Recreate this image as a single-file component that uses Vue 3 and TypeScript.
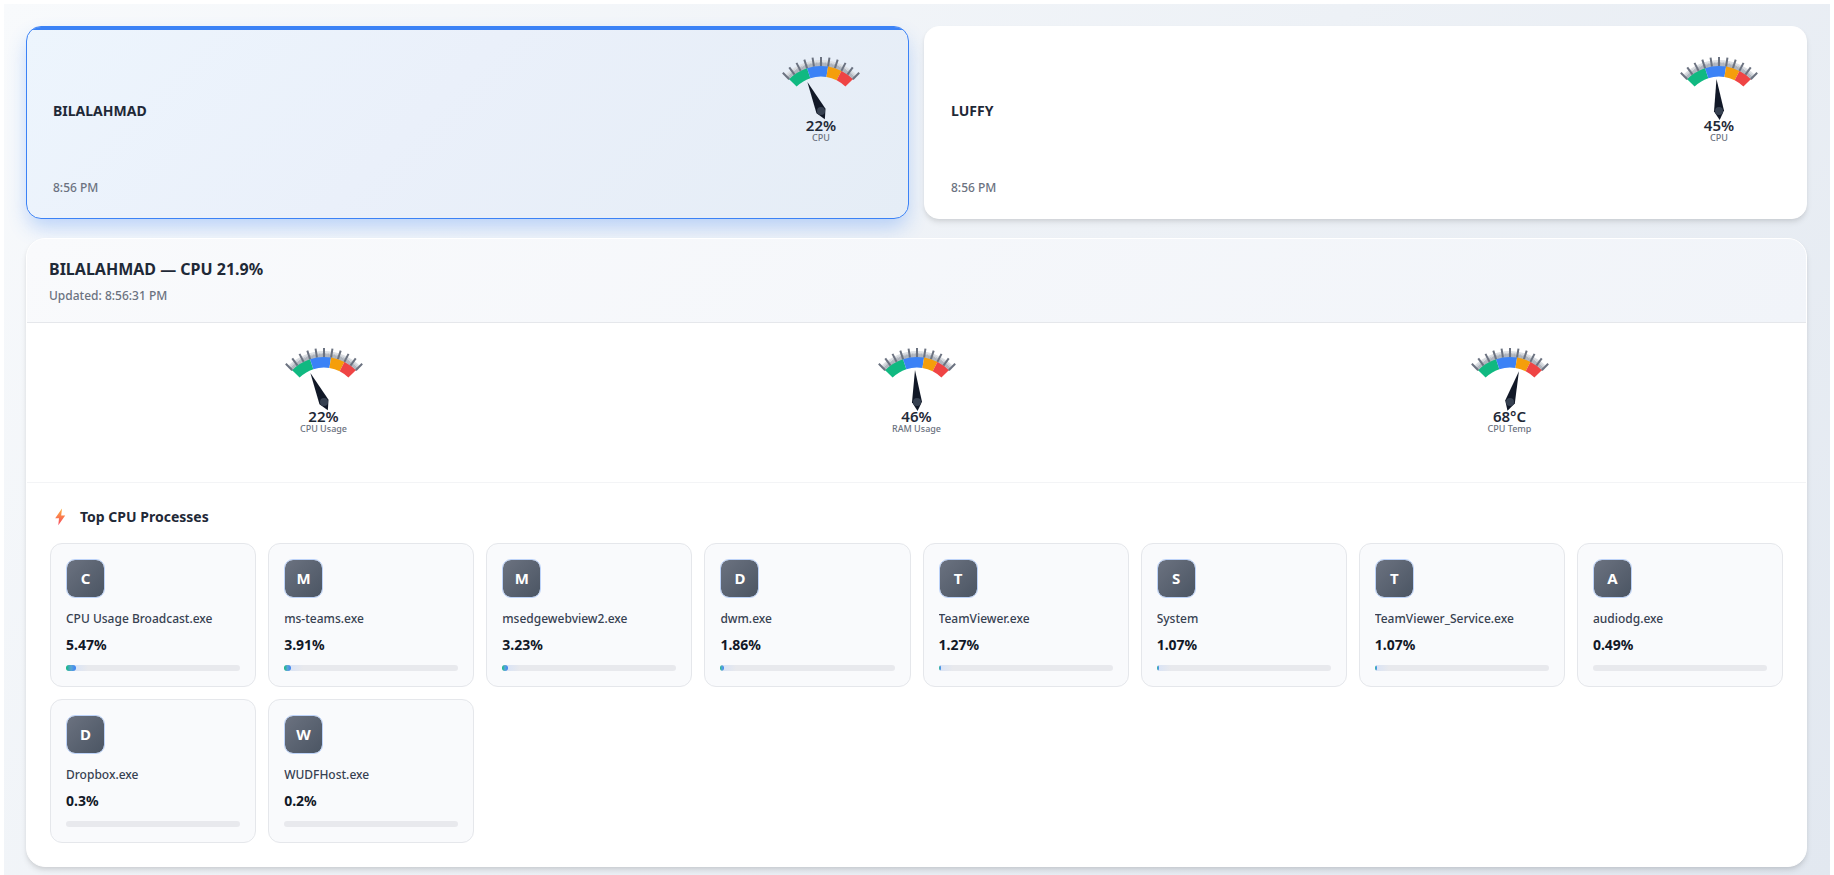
<script setup lang="ts">
import { ref } from 'vue'

interface Machine {
  name: string
  time: string
  cpu: number
}
interface Gauge {
  label: string
  value: number
  text: string
}
interface Proc {
  name: string
  cpu: number
}

const machines: Machine[] = [
  { name: 'BILALAHMAD', time: '8:56 PM', cpu: 22 },
  { name: 'LUFFY', time: '8:56 PM', cpu: 45 },
]
const selected = ref('BILALAHMAD')

const gauges: Gauge[] = [
  { label: 'CPU Usage', value: 22, text: '22%' },
  { label: 'RAM Usage', value: 46, text: '46%' },
  { label: 'CPU Temp', value: 68, text: '68°C' },
]

const processes: Proc[] = [
  { name: 'CPU Usage Broadcast.exe', cpu: 5.47 },
  { name: 'ms-teams.exe', cpu: 3.91 },
  { name: 'msedgewebview2.exe', cpu: 3.23 },
  { name: 'dwm.exe', cpu: 1.86 },
  { name: 'TeamViewer.exe', cpu: 1.27 },
  { name: 'System', cpu: 1.07 },
  { name: 'TeamViewer_Service.exe', cpu: 1.07 },
  { name: 'audiodg.exe', cpu: 0.49 },
  { name: 'Dropbox.exe', cpu: 0.3 },
  { name: 'WUDFHost.exe', cpu: 0.2 },
]

// Dial angles: 0% is 45° left of vertical, 100% is 45° right.
const angle = (percent: number) => -45 + percent * 0.9

const point = (r: number, percent: number) => {
  const a = (angle(percent) * Math.PI) / 180
  return `${(r * Math.sin(a)).toFixed(2)} ${(-r * Math.cos(a)).toFixed(2)}`
}
const band = (from: number, to: number, inner: number, outer: number) =>
  `M${point(outer, from)}A${outer} ${outer} 0 0 1 ${point(outer, to)}` +
  `L${point(inner, to)}A${inner} ${inner} 0 0 0 ${point(inner, from)}Z`

const zones = [
  { d: band(0, 30, 34.5, 45), color: '#10b981' },
  { d: band(30, 60, 34.5, 45), color: '#3b82f6' },
  { d: band(60, 80, 34.5, 45), color: '#f59e0b' },
  { d: band(80, 100, 34.5, 45), color: '#ef4444' },
]
const rim = band(0, 100, 44, 51)
const rimInner = band(0, 100, 44, 48)
const ticks = Array.from({ length: 11 }, (_, i) => angle(i * 10))
const minorTicks = Array.from({ length: 51 }, (_, i) => angle(i * 2))
</script>

<template>
  <main class="page">
    <section class="machines">
      <button
        v-for="m in machines"
        :key="m.name"
        type="button"
        class="machine"
        :class="{ active: selected === m.name }"
        :aria-pressed="selected === m.name"
        @click="selected = m.name"
      >
        <span class="machine-row">
          <span class="machine-name">{{ m.name }}</span>
          <span class="gauge">
            <svg class="dial" viewBox="-40 -54 80 60" aria-hidden="true">
              <path :d="rim" fill="#dcdfe3" />
              <path :d="rimInner" fill="#b9bec5" />
              <line v-for="t in minorTicks" :key="'n' + t" class="minor" y1="-44" y2="-49" :transform="`rotate(${t})`" />
              <line v-for="t in ticks" :key="t" class="tick" y1="-45" y2="-54" :transform="`rotate(${t})`" />
              <path v-for="z in zones" :key="z.color" :d="z.d" :fill="z.color" />
              <g :transform="`rotate(${angle(m.cpu)})`">
                <path d="M0-32L5 0L0 9L-5 0Z" fill="#111827" />
              </g>
              <circle r="4" fill="#374151" />
            </svg>
            <span class="gauge-value">{{ m.cpu }}%</span>
            <span class="gauge-label">CPU</span>
          </span>
        </span>
        <span class="machine-time">{{ m.time }}</span>
      </button>
    </section>

    <section class="panel">
      <header class="panel-head">
        <h1>BILALAHMAD — CPU 21.9%</h1>
        <p>Updated: 8:56:31 PM</p>
      </header>

      <div class="gauges">
        <div v-for="g in gauges" :key="g.label" class="gauge">
          <svg class="dial" viewBox="-40 -54 80 60" aria-hidden="true">
            <path :d="rim" fill="#dcdfe3" />
            <path :d="rimInner" fill="#b9bec5" />
            <line v-for="t in minorTicks" :key="'n' + t" class="minor" y1="-44" y2="-49" :transform="`rotate(${t})`" />
            <line v-for="t in ticks" :key="t" class="tick" y1="-45" y2="-54" :transform="`rotate(${t})`" />
            <path v-for="z in zones" :key="z.color" :d="z.d" :fill="z.color" />
            <g :transform="`rotate(${angle(g.value)})`">
              <path d="M0-32L5 0L0 9L-5 0Z" fill="#111827" />
            </g>
            <circle r="4" fill="#374151" />
          </svg>
          <span class="gauge-value">{{ g.text }}</span>
          <span class="gauge-label">{{ g.label }}</span>
        </div>
      </div>

      <div class="processes">
        <h2>
          <svg class="bolt" viewBox="0 0 20 20" aria-hidden="true">
            <defs>
              <linearGradient id="bolt-fill" x1="0" y1="0" x2="0" y2="1">
                <stop offset="0" stop-color="#fbb03c" />
                <stop offset="1" stop-color="#f8465f" />
              </linearGradient>
            </defs>
            <path d="M12 1.6L5.2 11.2H9L8.3 18.2L15.2 8.4H11.2Z" fill="url(#bolt-fill)" />
          </svg>
          Top CPU Processes
        </h2>
        <ul class="grid">
          <li v-for="p in processes" :key="p.name" class="proc">
            <span class="avatar">{{ p.name[0].toUpperCase() }}</span>
            <span class="proc-name">{{ p.name }}</span>
            <strong class="proc-cpu">{{ p.cpu }}%</strong>
            <span
              class="bar"
              role="progressbar"
              :aria-label="p.name"
              :aria-valuenow="p.cpu"
              aria-valuemin="0"
              aria-valuemax="100"
            >
              <span v-if="p.cpu >= 1" class="fill" :style="{ width: `${p.cpu}%` }"></span>
              <span v-if="p.cpu >= 1" class="glow"></span>
            </span>
          </li>
        </ul>
      </div>
    </section>
  </main>
</template>

<style>
body {
  margin: 0;
  background: #fff;
}
</style>

<style scoped>
.page {
  box-sizing: border-box;
  min-height: 100vh;
  border: 4px solid #fff;
  border-bottom: 0;
  padding: 22px 23px 8px 22px;
  background: linear-gradient(135deg, #f8fafc 0%, #e2e8f0 100%);
  font-family: 'Noto Sans', 'Open Sans', sans-serif;
  color: #1f2937;
}
.machines {
  display: grid;
  grid-template-columns: 1fr 1fr;
  gap: 15px;
  margin-bottom: 19px;
}
.machine {
  position: relative;
  display: flex;
  flex-direction: column;
  gap: 7px;
  overflow: hidden;
  border: 1px solid #fff;
  border-radius: 15px;
  padding: 25px 26px 22px;
  background: #fff;
  box-shadow: 0 4px 6px -1px rgba(0, 0, 0, 0.1), 0 2px 4px -1px rgba(0, 0, 0, 0.06);
  color: inherit;
  font: inherit;
  text-align: left;
  cursor: pointer;
}
.machine.active {
  border-color: #3b82f6;
  background: linear-gradient(135deg, #edf5fd 0%, #eaf0fa 45%, #e5edf6 100%);
  box-shadow: 0 10px 20px -2px rgba(59, 130, 246, 0.32);
}
.machine.active::before {
  content: '';
  position: absolute;
  inset: 0 0 auto;
  height: 3px;
  background: #3b82f6;
}
.machine-row {
  display: flex;
  align-items: center;
  justify-content: space-between;
}
.machine-name {
  padding-bottom: 2px;
  font-size: 14px;
  line-height: 20px;
  font-weight: 700;
}
.machine-time {
  font-size: 12px;
  line-height: 17px;
  font-weight: 500;
  color: #6b7280;
}
.gauge {
  box-sizing: border-box;
  display: flex;
  flex-direction: column;
  align-items: center;
  width: 122px;
  height: 120px;
  padding-top: 5px;
}
.dial {
  display: block;
  width: 80px;
  height: 60px;
  overflow: visible;
}
.tick {
  stroke: #6b7280;
  stroke-width: 2;
}
.minor {
  stroke: #9ca3af;
  stroke-width: 0.5;
}
.gauge-value {
  position: relative;
  font-size: 15px;
  line-height: 16px;
  font-weight: 600;
}
.gauge-label {
  font-size: 9px;
  line-height: 10px;
  font-weight: 500;
  color: #6b7280;
}
.panel {
  position: relative;
  overflow: hidden;
  border: 1px solid #fff;
  border-radius: 19px;
  background: #fff;
  box-shadow: 0 4px 6px -1px rgba(0, 0, 0, 0.12), 0 2px 4px -1px rgba(0, 0, 0, 0.06);
}
.panel-head {
  padding: 18px 22px 17px;
  border-bottom: 1px solid #e5e7eb;
  background: linear-gradient(135deg, #f9fafc 0%, #f1f4f9 100%);
}
.panel-head h1 {
  margin: 0 0 6px;
  font-size: 16px;
  line-height: 24px;
  font-weight: 700;
}
.panel-head p {
  margin: 0;
  font-size: 12px;
  line-height: 18px;
  font-weight: 500;
  color: #6b7280;
}
.gauges {
  display: grid;
  grid-template-columns: repeat(3, 1fr);
  justify-items: center;
  padding: 20px 0 19px;
  border-bottom: 1px solid #f3f4f6;
}
.processes {
  padding: 22px 23px 23px;
}
.processes h2 {
  display: flex;
  align-items: center;
  gap: 10px;
  margin: 0 0 14px;
  font-size: 14px;
  line-height: 24px;
  font-weight: 700;
}
.bolt {
  width: 20px;
  height: 20px;
}
.grid {
  display: grid;
  grid-template-columns: repeat(8, 1fr);
  gap: 12px;
  margin: 0;
  padding: 0;
  list-style: none;
}
.proc {
  display: flex;
  flex-direction: column;
  min-width: 0;
  padding: 15px;
  border: 1px solid #e5e7eb;
  border-radius: 12px;
  background: #f9fafc;
}
.avatar {
  box-sizing: border-box;
  display: flex;
  align-items: center;
  justify-content: center;
  width: 39px;
  height: 39px;
  margin-bottom: 11px;
  padding-bottom: 2px;
  border: 1px solid #bcd2f8;
  border-radius: 9px;
  background: linear-gradient(135deg, #6b7280, #4b5563) padding-box;
  color: #fff;
  font-size: 15px;
  font-weight: 700;
}
.proc-name {
  overflow: hidden;
  margin-bottom: 6px;
  font-size: 12px;
  line-height: 20px;
  font-weight: 500;
  white-space: nowrap;
  text-overflow: ellipsis;
  color: #374151;
}
.proc-cpu {
  margin-bottom: 10px;
  font-size: 14px;
  line-height: 20px;
  font-weight: 700;
  color: #111827;
}
.bar {
  display: flex;
  height: 6px;
  overflow: hidden;
  border-radius: 3px;
  background: #e8e9ed;
}
.fill {
  min-width: 2px;
  border-radius: 0 3px 3px 0;
  background: linear-gradient(90deg, #10b981, #5aa5d6 50%, #3b82f6);
}
.glow {
  width: 12px;
  background: linear-gradient(90deg, #dbe4f5, #e8e9ed);
}
</style>
